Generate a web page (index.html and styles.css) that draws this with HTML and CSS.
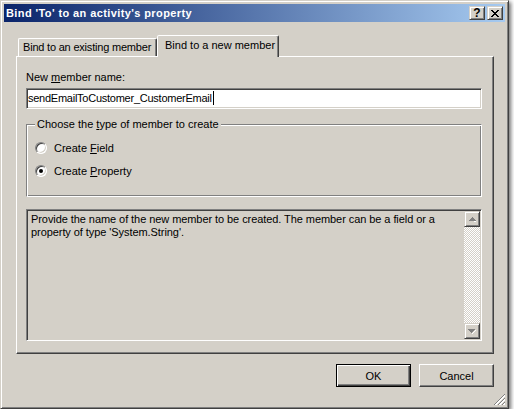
FILE: index.html
```html
<!DOCTYPE html>
<html lang="en">
<head>
    <meta charset="UTF-8">
    <title>Bind 'To' to an activity's property</title>
    <link rel="stylesheet" href="styles.css">
</head>
<body>
    <div class="window">
        <div class="titlebar">
            <span class="title">Bind 'To' to an activity's property</span>
            <div class="caption-buttons">
                <span class="cap-btn help">?</span>
                <span class="cap-btn close">
                    <svg width="8" height="7" viewBox="0 0 8 7" shape-rendering="crispEdges">
                        <path d="M0 0h2v1h-2zM6 0h2v1h-2zM1 1h2v1h-2zM5 1h2v1h-2zM2 2h4v1h-4zM3 3h2v1h-2zM2 4h4v1h-4zM1 5h2v1h-2zM5 5h2v1h-2zM0 6h2v1h-2zM6 6h2v1h-2z" fill="#000"/>
                    </svg>
                </span>
            </div>
        </div>
        <div class="client">
            <div class="tabs">
                <div class="tab">Bind to an existing member</div>
                <div class="tab active">Bind to a new member</div>
            </div>
            <div class="tab-panel">
                <div class="field-label">New <u>m</u>ember name:</div>
                <div class="textbox">sendEmailToCustomer_CustomerEmail<span class="caret"></span></div>
                <fieldset class="group">
                    <legend>Choose the <u>t</u>ype of member to create</legend>
                    <div class="radio-row"><span class="radio"></span><span>Create <u>F</u>ield</span></div>
                    <div class="radio-row"><span class="radio checked"></span><span>Create <u>P</u>roperty</span></div>
                </fieldset>
                <div class="description">
                    <div class="desc-text">Provide the name of the new member to be created. The member can be a field or a<br>property of type 'System.String'.</div>
                    <div class="scrollbar">
                        <div class="scroll-btn">
                            <svg width="7" height="5" viewBox="0 0 7 5" shape-rendering="crispEdges">
                                <path d="M4 1h1v1h1v1h1v1h-3z" fill="#fff" transform="translate(1 1)"/>
                                <path d="M3 0h1v1h1v1h1v1h1v1h-7v-1h1v-1h1v-1h1z" fill="#808080"/>
                            </svg>
                        </div>
                        <div class="scroll-track"></div>
                        <div class="scroll-btn">
                            <svg width="8" height="5" viewBox="0 0 8 5" shape-rendering="crispEdges">
                                <path d="M0 0h7v1h-1v1h-1v1h-1v1h-1v-1h-1v-1h-1v-1h-1z" fill="#808080"/>
                                <path d="M7 1h1v1h-1v1h-1v1h-1v1h-1v-1h1v-1h1v-1h1z" fill="#fff"/>
                            </svg>
                        </div>
                    </div>
                </div>
            </div>
            <div class="buttons">
                <button class="btn default">OK</button>
                <button class="btn">Cancel</button>
            </div>
        </div>
        <svg class="grip" width="12" height="12" viewBox="0 0 12 12" shape-rendering="crispEdges">
            <path d="M11 0L0 11M11 4L4 11M11 8L8 11" stroke="#808080" stroke-width="1.4"/>
            <path d="M11 1.5L1.5 11M11 5.5L5.5 11M11 9.5L9.5 11" stroke="#fff" stroke-width="1"/>
        </svg>
    </div>
</body>
</html>
```

FILE: styles.css
```css
body {
    margin: 0;
    padding: 0;
    background: #fff;
    font-family: "Liberation Sans", Arial, sans-serif;
    font-size: 11px;
    color: #000;
}
.window {
    position: relative;
    box-sizing: border-box;
    width: 509px;
    height: 409px;
    padding: 3px;
    background: #d4d0c8;
    border: 1px solid;
    border-color: #d4d0c8 #404040 #404040 #d4d0c8;
    box-shadow: inset 1px 1px #fff, inset -1px -1px #808080, 2px 2px 4px rgba(0,0,0,0.55);
}
.titlebar {
    display: flex;
    align-items: center;
    justify-content: space-between;
    height: 18px;
    padding: 0 2px 0 2px;
    background: linear-gradient(to right, #0a246a, #a6caf0);
}
.title {
    color: #fff;
    font-weight: bold;
    font-size: 11px;
    letter-spacing: 0.4px;
    line-height: 18px;
    white-space: nowrap;
}
.caption-buttons {
    display: flex;
    gap: 2px;
}
.cap-btn {
    box-sizing: border-box;
    display: flex;
    align-items: center;
    justify-content: center;
    width: 16px;
    height: 14px;
    background: #d4d0c8;
    border: 1px solid;
    border-color: #d4d0c8 #404040 #404040 #d4d0c8;
    box-shadow: inset 1px 1px #fff, inset -1px -1px #808080;
}
.cap-btn.help {
    font-weight: bold;
    font-size: 12px;
    line-height: 12px;
}
.client {
    padding: 13px 11px 0 12px;
}
.tabs {
    display: flex;
    align-items: flex-end;
    height: 21px;
    padding-left: 2px;
}
.tab {
    box-sizing: border-box;
    width: 139px;
    height: 18px;
    padding-left: 4px;
    line-height: 17px;
    letter-spacing: -0.2px;
    border: 1px solid;
    border-bottom: none;
    border-color: #fff #404040 transparent #fff;
    border-radius: 2px 2px 0 0;
    box-shadow: inset -1px 0 #808080;
    white-space: nowrap;
}
.tab.active {
    position: relative;
    z-index: 1;
    width: 122px;
    height: 22px;
    margin-bottom: -1px;
    padding-left: 7px;
    line-height: 18px;
    letter-spacing: 0;
    background: #d4d0c8;
}
.tab-panel {
    box-sizing: border-box;
    height: 298px;
    padding: 14px 11px 0 9px;
    border: 1px solid;
    border-color: #fff #404040 #404040 #fff;
    box-shadow: inset -1px -1px #808080;
}
.field-label {
    line-height: 12px;
}
.textbox {
    box-sizing: border-box;
    height: 21px;
    margin-top: 5px;
    padding-left: 1px;
    line-height: 18px;
    letter-spacing: -0.25px;
    background: #fff;
    border: 1px solid;
    border-color: #808080 #fff #fff #808080;
    box-shadow: inset 1px 1px #404040, inset -1px -1px #d4d0c8;
    white-space: nowrap;
}
.caret {
    display: inline-block;
    width: 1px;
    height: 14px;
    margin-left: 1px;
    vertical-align: -3px;
    background: #000;
}
.group {
    margin: 8px 0 0 0;
    padding: 9px 0 17px 0;
    border: 1px solid;
    border-color: #808080 #fff #fff #808080;
    box-shadow: inset 1px 1px #fff, inset -1px -1px #808080;
}
.group legend {
    margin-left: 8px;
    padding: 0 2px;
    line-height: 14px;
    background: #d4d0c8;
}
.radio-row {
    display: flex;
    align-items: center;
    height: 16px;
    padding-left: 8px;
}
.radio-row + .radio-row {
    margin-top: 7px;
}
.radio {
    box-sizing: border-box;
    position: relative;
    width: 12px;
    height: 12px;
    margin-right: 7px;
    border-radius: 50%;
    background: #fff;
    border: 1px solid;
    border-color: #808080 #fff #fff #808080;
    box-shadow: inset 1px 1px #404040, inset -1px -1px #d4d0c8;
}
.radio.checked::after {
    content: "";
    position: absolute;
    left: 3px;
    top: 3px;
    width: 4px;
    height: 4px;
    border-radius: 50%;
    background: #000;
}
.description {
    box-sizing: border-box;
    display: flex;
    height: 132px;
    margin-top: 12px;
    border: 1px solid;
    border-color: #808080 #fff #fff #808080;
    box-shadow: inset 1px 1px #404040, inset -1px -1px #d4d0c8;
    padding: 1px;
}
.desc-text {
    flex: 1;
    padding: 2px 3px;
    line-height: 13px;
    letter-spacing: -0.07px;
    white-space: nowrap;
}
.scrollbar {
    display: flex;
    flex-direction: column;
    width: 16px;
}
.scroll-btn {
    box-sizing: border-box;
    display: flex;
    align-items: center;
    justify-content: center;
    height: 16px;
    background: #d4d0c8;
    border: 1px solid;
    border-color: #d4d0c8 #404040 #404040 #d4d0c8;
    box-shadow: inset 1px 1px #fff, inset -1px -1px #808080;
}
.scroll-track {
    flex: 1;
    background: conic-gradient(#fff 25%, #d4d0c8 0 50%, #fff 0 75%, #d4d0c8 0);
    background-size: 2px 2px;
}
.buttons {
    display: flex;
    justify-content: flex-end;
    gap: 8px;
    margin-top: 10px;
}
.btn {
    box-sizing: border-box;
    width: 75px;
    height: 23px;
    padding: 0;
    font-family: "Liberation Sans", Arial, sans-serif;
    font-size: 11px;
    color: #000;
    background: #d4d0c8;
    border: 1px solid;
    border-color: #fff #404040 #404040 #fff;
    box-shadow: inset -1px -1px #808080;
}
.btn.default {
    border-color: #000;
    box-shadow: inset 1px 1px #fff, inset -1px -1px #404040, inset -2px -2px #808080;
}
.grip {
    position: absolute;
    right: 2px;
    bottom: 2px;
}
```
